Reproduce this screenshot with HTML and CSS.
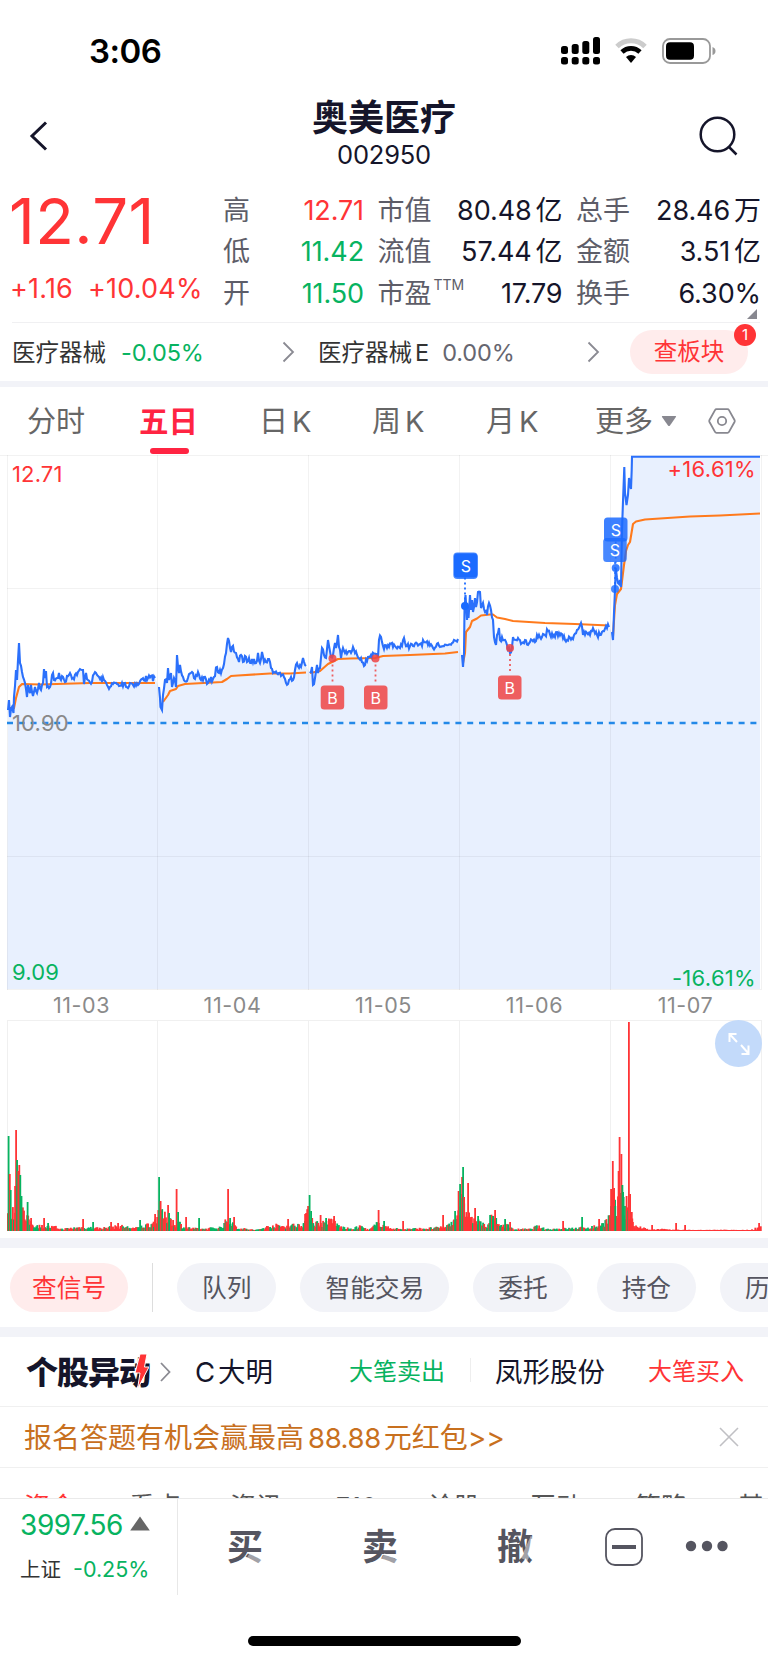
FILE: index.html
```html
<!DOCTYPE html>
<html lang="zh-CN">
<head>
  <meta charset="UTF-8" />
  <meta name="viewport" content="width=device-width, initial-scale=1.0"/>
  <title>奥美医疗 002950</title>
  <link rel="stylesheet" href="styles.css">
</head>
<body>
  <div class="status-bar">
    <span class="time">3:06</span>
    <svg class="signal" width="40" height="28" viewBox="0 0 40 28">
      <rect x="0" y="9" width="7" height="8" rx="2.5"/>
      <rect x="10.7" y="7" width="7" height="10" rx="2.5"/>
      <rect x="21.3" y="4" width="7" height="13" rx="2.5"/>
      <rect x="32" y="0" width="7" height="17" rx="2.5"/>
      <rect x="0" y="20" width="7" height="7.5" rx="2.5"/>
      <rect x="10.7" y="20" width="7" height="7.5" rx="2.5"/>
      <rect x="21.3" y="20" width="7" height="7.5" rx="2.5"/>
      <rect x="32" y="20" width="7" height="7.5" rx="2.5"/>
    </svg>
    <svg class="wifi" width="34" height="26" viewBox="0 0 34 26">
      <path d="M3 8.5a20 20 0 0 1 28 0" fill="none" stroke="#ccc" stroke-width="5"/>
      <path d="M8 14a13 13 0 0 1 18 0" fill="none" stroke="#000" stroke-width="4.6"/>
      <path d="M17 25l-5-6a7.4 7.4 0 0 1 10 0z"/>
    </svg>
    <svg class="battery" width="54" height="26" viewBox="0 0 54 26">
      <rect x="1" y="1" width="47" height="24" rx="7" fill="none" stroke="#999" stroke-width="1.8"/>
      <rect x="4" y="4.2" width="28" height="17.6" rx="4"/>
      <path d="M50.5 9v8q3-1 3-4t-3-4z" fill="#999"/>
    </svg>
  </div>

  <header class="header">
    <svg width="20" height="30" viewBox="0 0 20 30"><path d="M17 1.5L3 15l14 13.5" fill="none" stroke="#15152a" stroke-width="3"/></svg>
    <div class="title">
      <h1>奥美医疗</h1>
      <span>002950</span>
    </div>
    <svg width="40" height="40" viewBox="0 0 40 40"><g fill="none" stroke="#15152a" stroke-width="2.5"><circle cx="18.5" cy="18.5" r="16.8"/><path d="M30 31l7.5 7.5"/></g></svg>
  </header>

  <section class="quote">
    <div class="price-box">
      <div class="price">12.71</div>
      <div class="change"><span>+1.16</span><span>+10.04%</span></div>
    </div>
    <div class="stats">
      <div class="stat"><label>高</label><b class="up">12.71</b></div>
      <div class="stat"><label>市值</label><b>80.48<i>亿</i></b></div>
      <div class="stat"><label>总手</label><b>28.46<i>万</i></b></div>
      <div class="stat"><label>低</label><b class="down">11.42</b></div>
      <div class="stat"><label>流值</label><b>57.44<i>亿</i></b></div>
      <div class="stat"><label>金额</label><b>3.51<i>亿</i></b></div>
      <div class="stat"><label>开</label><b class="down">11.50</b></div>
      <div class="stat"><label>市盈<sup>TTM</sup></label><b>17.79</b></div>
      <div class="stat"><label>换手</label><b>6.30%</b></div>
    </div>
    <div class="corner"></div>
  </section>

  <section class="sectors">
    <div class="sector">医疗器械<span class="down">-0.05%</span></div>
    <svg class="arrow" width="13" height="22" viewBox="0 0 13 22"><path d="M1.5 1.5L11 11l-9.5 9.5"/></svg>
    <div class="sector second">医疗器械<em>E</em><span class="flat">0.00%</span></div>
    <svg class="arrow" width="13" height="22" viewBox="0 0 13 22"><path d="M1.5 1.5L11 11l-9.5 9.5"/></svg>
    <div class="check-btn">查板块<span class="badge">1</span></div>
  </section>

  <div class="band small"></div>

  <nav class="tabs">
    <span>分时</span>
    <span class="active">五日</span>
    <span>日<em>K</em></span>
    <span>周<em>K</em></span>
    <span>月<em>K</em></span>
    <span class="more">更多<svg width="16" height="12" viewBox="0 0 16 12"><path d="M1.500 1h13q1 0 .4 1L9 10.500q-1 1.200-2 0L1 2q-.5-1 .5-1z" fill="#888890"/></svg></span>
    <svg class="gear" width="28" height="26" viewBox="0 0 28 26"><g fill="none" stroke="#888890" stroke-width="1.8"><path d="M8.500 1.200h11q1 0 1.500.9L26.500 12q.5 1 0 2L21 23.900q-.5.9-1.500.9h-11q-1 0-1.500-.9L1.500 14q-.5-1 0-2L7 2.100q.5-.9 1.500-.9z"/><circle cx="14" cy="13" r="4.200"/></g></svg>
  </nav>

  <section class="chart">
    <svg id="priceChart" width="768" height="536" viewBox="0 0 768 536"></svg>
    <span class="lab top-left up">12.71</span>
    <span class="lab top-right up">+16.61%</span>
    <span class="lab mid">10.90</span>
    <span class="lab bottom-left down">9.09</span>
    <span class="lab bottom-right down">-16.61%</span>
  </section>

  <div class="dates">
    <span>11-03</span><span>11-04</span><span>11-05</span><span>11-06</span><span>11-07</span>
  </div>

  <section class="volume">
    <svg id="volumeChart" width="768" height="212" viewBox="0 0 768 212"></svg>
    <div class="expand">
      <svg width="24" height="24" viewBox="0 0 24 24"><path d="M9.500 2H2.500v8M2.500 2l7.500 8M14 13l7.500 8.500M14.500 22h7v-8.500" fill="none" stroke="#fff" stroke-width="2"/></svg>
    </div>
  </section>

  <div class="band"></div>

  <div class="actions">
    <span class="pill red">查信号</span>
    <i class="sep"></i>
    <span class="pill">队列</span>
    <span class="pill">智能交易</span>
    <span class="pill">委托</span>
    <span class="pill">持仓</span>
    <span class="pill">历史</span>
  </div>

  <div class="band"></div>

  <div class="unusual">
    <div class="logo">个股异动<svg width="14" height="36" viewBox="0 0 14 36"><path d="M5 0h7L9.500 13H14L2.500 35 5 19H0z" fill="#ff3436" stroke="#fff" stroke-width="1"/></svg></div>
    <svg class="arrow" width="11" height="20" viewBox="0 0 11 20"><path d="M1 1l8.500 9L1 19"/></svg>
    <span class="name">C<i>大明</i></span>
    <span class="tag down">大笔卖出</span>
    <i class="line"></i>
    <span class="name2">凤形股份</span>
    <span class="tag2 up">大笔买入</span>
  </div>

  <div class="promo">
    <span>报名答题有机会赢最高<em>88.88</em>元红包&gt;&gt;</span>
    <svg width="20" height="20" viewBox="0 0 20 20"><path d="M1 1l18 18M19 1L1 19" stroke="#c0c0c4" stroke-width="1.600"/></svg>
  </div>

  <div class="sub-tabs">
    <span class="on">资金</span><span>看点</span><span>资讯</span><span>F10</span><span>诊股</span><span>互动</span><span>策略</span><span>基金</span>
  </div>

  <footer class="bottom">
    <div class="index">
      <div class="index-value down">3997.56<svg width="20" height="15" viewBox="0 0 20 15"><path d="M10 .5L19.800 14.500H.2z" fill="#666"/></svg></div>
      <div class="index-change">上证<span class="down">-0.25%</span></div>
    </div>
    <div class="trade buy">买</div>
    <div class="trade sell">卖</div>
    <div class="trade cancel">撤</div>
    <svg class="box" width="38" height="38" viewBox="0 0 38 38"><rect x="1" y="1" width="36" height="36" rx="9" fill="none" stroke="#555560" stroke-width="1.800"/><path d="M7 19h24" stroke="#555560" stroke-width="4"/></svg>
    <svg class="dots" width="44" height="12" viewBox="0 0 44 12" fill="#555560"><circle cx="6" cy="6" r="5.200"/><circle cx="22" cy="6" r="5.200"/><circle cx="37.500" cy="6" r="5.200"/></svg>
  </footer>
  <div class="home-bar"></div>

  <script src="chart.js"></script>
</body>
</html>
```
FILE: styles.css
```css
* {
  box-sizing: border-box;
}
body {
  margin: 0;
  width: 768px;
  height: 1663px;
  overflow: hidden;
  background: #fff;
  color: #15152a;
  font-family: Inter, "Noto Sans CJK SC", sans-serif;
}
svg {
  display: block;
  flex: none;
}
i, em {
  font-style: normal;
}
.up {
  color: #ff3436;
}
.down {
  color: #07b360;
}
.flat {
  color: #666670;
}
.arrow path {
  fill: none;
  stroke: #8a8a92;
  stroke-width: 1.8;
}

/* status bar */
.status-bar {
  display: flex;
  align-items: center;
  height: 102px;
  padding-left: 89px;
  color: #000;
}
.time {
  width: 472px;
  font-size: 33px;
  font-weight: 600;
  letter-spacing: -0.5px;
}
.wifi {
  margin-left: 13px;
}
.battery {
  margin-left: 14px;
}

/* header */
.header {
  display: flex;
  align-items: center;
  justify-content: space-between;
  height: 68px;
  padding: 0 29px 0 29px;
}
.title {
  text-align: center;
}
.title h1 {
  margin: 0;
  font-size: 36px;
  line-height: 38px;
  font-weight: 700;
  padding-left: 20px;
}
.title span {
  display: block;
  font-size: 25.5px;
  line-height: 36px;
  padding-left: 20px;
  letter-spacing: -0.2px;
}

/* quote */
.quote {
  position: relative;
  display: flex;
  height: 153px;
  margin: 0 8px 0 12px;
  padding-top: 20px;
  border-bottom: 1px solid #f0f0f2;
}
.price-box {
  width: 211px;
  color: #ff3436;
  white-space: nowrap;
}
.price {
  margin-left: -3px;
  font-size: 63.5px;
  line-height: 62px;
  letter-spacing: 0.4px;
}
.change {
  display: flex;
  gap: 15px;
  margin-left: -2px;
  margin-top: 20px;
  font-size: 27px;
  line-height: 34px;
  letter-spacing: 0.2px;
}
.stats {
  display: grid;
  grid-template-columns: 140px 184px 184px;
  grid-template-rows: repeat(3, 41.5px);
  column-gap: 14.5px;
}
.stat {
  display: flex;
  justify-content: space-between;
  align-items: center;
  font-size: 27px;
  line-height: 40px;
  white-space: nowrap;
}
.stat label {
  display: flex;
  color: #5d5d68;
}
.stat b {
  font-weight: 400;
  margin-right: -1px;
  letter-spacing: -0.1px;
}
.stat i {
  margin-left: 4px;
}
.stat sup {
  margin-left: 2px;
  font-size: 14px;
  line-height: 22px;
}
.corner {
  position: absolute;
  right: 3px;
  bottom: 3px;
  border-left: 10px solid transparent;
  border-bottom: 10px solid #888890;
}

/* sectors */
.sectors {
  display: flex;
  align-items: center;
  height: 58px;
  padding-left: 12px;
  font-size: 23.5px;
}
.sector {
  display: flex;
  align-items: baseline;
  width: 270px;
  padding-bottom: 2px;
  color: #333;
}
.sector span {
  margin-left: 15px;
  letter-spacing: -0.1px;
}
.sector.second {
  width: 269px;
  margin-left: 23px;
}
.sector.second span {
  margin-left: 13px;
}
.sector.second em {
  margin-left: 3px;
}
.check-btn {
  position: relative;
  width: 118px;
  height: 44px;
  margin-left: 30px;
  border-radius: 22px;
  background: #ffecec;
  color: #ff3436;
  line-height: 43px;
  text-align: center;
}
.badge {
  position: absolute;
  top: -6px;
  right: -8px;
  width: 22px;
  height: 22px;
  border-radius: 50%;
  background: #ff3436;
  color: #fff;
  font-size: 15px;
  line-height: 22px;
}
.band {
  height: 10px;
  background: #f2f3f8;
}
.band.small {
  height: 6px;
}

/* period tabs */
.tabs {
  display: flex;
  align-items: center;
  height: 68px;
  padding-left: 27px;
  color: #666;
  font-size: 29px;
}
.tabs span {
  position: relative;
  width: 113px;
  line-height: 69px;
  height: 68px;
  white-space: nowrap;
}
.tabs span:nth-child(3) {
  margin-left: 7px;
}
.tabs span:nth-child(5) {
  margin-left: 1px;
  width: 109px;
}
.tabs .active {
  margin-left: -1px;
  color: #ff2442;
  font-size: 29.5px;
  font-weight: 700;
}
.tabs .active::after {
  content: "";
  position: absolute;
  left: 11px;
  bottom: 1px;
  width: 39px;
  height: 6px;
  border-radius: 3px;
  background: #ff2442;
}
.tabs em {
  margin-left: 4px;
}
.tabs .more {
  display: flex;
  align-items: center;
}
.more svg {
  margin-left: 8px;
}

/* charts */
.chart {
  position: relative;
  height: 536px;
}
.lab {
  position: absolute;
  font-size: 22px;
  line-height: 22px;
  letter-spacing: 0.15px;
}
.top-left {
  left: 12px;
  top: 8px;
}
.top-right {
  right: 12px;
  top: 3px;
  letter-spacing: 0.3px;
}
.mid {
  left: 12px;
  top: 257px;
  color: #888;
}
.bottom-left {
  left: 12px;
  bottom: 8px;
}
.bottom-right {
  right: 12px;
  bottom: 2px;
  letter-spacing: 0.3px;
}
#priceChart text {
  fill: #fff;
  font-size: 16px;
  text-anchor: middle;
}
.dates {
  display: grid;
  grid-template-columns: repeat(5, 151px);
  height: 29px;
  padding-left: 6px;
  color: #8a8a8a;
  font-size: 21.5px;
  line-height: 29px;
  letter-spacing: 0.6px;
  text-align: center;
}
.volume {
  position: relative;
  height: 218px;
}
.expand {
  position: absolute;
  top: 0;
  right: 6px;
  display: flex;
  align-items: center;
  justify-content: center;
  width: 47px;
  height: 47px;
  border-radius: 50%;
  background: #c3dafa;
}

/* action pills */
.actions {
  display: flex;
  align-items: center;
  height: 79px;
  gap: 24px;
  padding-left: 10px;
  overflow: hidden;
}
.pill {
  flex: none;
  height: 49px;
  padding: 0 25px;
  border-radius: 25px;
  background: #f2f3f8;
  color: #555560;
  font-size: 24.7px;
  line-height: 50px;
}
.pill.red {
  padding: 0 22px;
  background: #ffecec;
  color: #ff3436;
}
.sep {
  flex: none;
  width: 1px;
  height: 49px;
  background: #ddd;
}

/* unusual moves */
.unusual {
  display: flex;
  align-items: center;
  height: 69px;
  padding: 0 0 4px 26px;
  font-size: 27.5px;
  white-space: nowrap;
}
.logo {
  position: relative;
  width: 134px;
  font-size: 32px;
  font-weight: 900;
  letter-spacing: -1px;
}
.logo svg {
  position: absolute;
  left: 109px;
  top: 7px;
}
.unusual .arrow {
  margin-top: 4px;
}
.name {
  width: 154px;
  margin-left: 24px;
}
.name i {
  margin-left: 3px;
}
.tag {
  width: 121px;
}
.tag, .tag2 {
  font-size: 24px;
}
.line {
  width: 1px;
  height: 24px;
  background: #eee;
}
.name2 {
  width: 153px;
  margin-left: 24px;
}
.promo {
  display: flex;
  align-items: center;
  justify-content: space-between;
  height: 62px;
  padding: 0 29px 2px 24px;
  border-top: 1px solid #f0f0f0;
  border-bottom: 1px solid #f0f0f0;
  color: #c8701e;
  font-size: 28px;
}
.promo svg {
  margin-top: 2px;
}
.promo em {
  margin: 0 3px 0 4px;
  font-size: 27.5px;
  letter-spacing: -0.4px;
}
.sub-tabs {
  display: grid;
  grid-template-columns: 105px 101px 105px 93px 102px 105px 103px 60px;
  height: 30px;
  padding: 22px 0 0 24px;
  overflow: hidden;
  color: #555;
  font-size: 26px;
  line-height: 34px;
}
.sub-tabs .on {
  color: #ff3436;
}

/* bottom bar */
.bottom {
  position: relative;
  display: flex;
  height: 97px;
  border-top: 1px solid #eaeaea;
  background: #fff;
}
.index {
  width: 178px;
  padding-left: 20px;
  border-right: 1px solid #e8e8e8;
}
.index-value {
  display: flex;
  align-items: center;
  gap: 7px;
  padding-top: 6px;
  font-size: 28px;
  line-height: 40px;
  letter-spacing: -0.4px;
}
.index-value svg {
  margin-top: -3px;
}
.index-change {
  padding-top: 4px;
  color: #333;
  font-size: 20.5px;
  line-height: 40px;
}
.index-change span {
  margin-left: 12px;
  font-size: 21.5px;
}
.trade {
  position: relative;
  width: 135px;
  color: #555560;
  font-size: 36px;
  font-weight: 700;
  line-height: 96px;
  padding-left: 49px;
}
.trade::after {
  content: "";
  position: absolute;
  left: 69px;
  top: 58px;
  width: 18px;
  height: 6px;
  background: rgba(255, 255, 255, 0.45);
  transform: rotate(28deg);
}
.trade.cancel::after {
  left: 69px;
  top: 46px;
  height: 7px;
  width: 24px;
  transform: rotate(-66deg);
}
.box {
  margin: 29px 0 0 22px;
}
.dots {
  margin: 41px 0 0 42px;
}
.home-bar {
  width: 273px;
  height: 10px;
  margin: 41px auto 0 248px;
  border-radius: 5px;
  background: #000;
}
```
FILE: chart.js
```js
// price points of each day: x, y, x, y ...
const prices = [
  [8,255,9,245,10,262,12,252,13.5,258,14,242,16,215,17,225,19,188,20,208,22,217,25,228,27,242,28,230,30,238,31,230,33,241,35,232,37,238,39,228,41,235,43,228,44,214,45,223,46,216,47,232,50,232,53,218,54,225,57,223,59,218,61,225,63,222,65,227,67,221,70,218,73,223,78,217,83,215,84,229,86,218,88,225,92,227,94,219,96,218,100,224,104,225,107,230,110,232,115,228,119,231,125,228,128,233,130,228,138,230,142,224,148,223,155,223],
  [159,232,160,243,160.5,252,162,255,163,240,165,225,167,228,168,213,169,225,171,218,172,232,174,223,176,232,177,200,179,218,180,210,183,222,187,226,191,218,195,224,198,217,201,225,204,222,208,228,214,222,217,212,219,218,223,213,226,198,228,183,231,197,232,192,236,198,239,207,241,200,243,207,245,201,247,207,249,203,251,208,254,204,256,208,258,198,260,208,262,197,264,207,269,204,271,213,274,217,279,218,284,222,286,228,289,225,291,222,293,225,295,215,297,208,299,213,301,212,303,203,305,210,306,211],
  [310,218,312,212,313,230,315,223,317,210,318,218,320,213,322,193,324,200,326,203,328,185,331,202,333,200,335,188,336,193,338,180,339,192,341,203,343,193,345,198,348,197,351,198,353,192,355,198,357,200,361,203,365,210,368,202,371,200,378,202,379,185,381,182,383,191,387,193,392,188,395,191,400,193,402,191,404,183,407,191,413,191,420,189,424,187,428,190,433,193,438,188,443,191,448,190,452,188,454,185,458,184],
  [462,200,463,212,464,198,464.5,155,465.5,140,467,165,468,152,468.5,163,470,140,471,155,472,145,473,157,475,143,476,152,478,137,480,137,481,153,483,148,487,160,489,148,491,155,493,165,494,182,496,190,497,180,499,173,500,185,502,182,504,185,507,190,510,198,512,192,513,182,516,185,518,183,522,188,525,185,528,190,532,185,535,187,537,180,542,182,545,180,548,176,551,182,554,180,559,178,565,185,572,183,577,175,581,168,583,180,587,178,590,180,593,173,597,180,600,180,603,176,606,171,609,172],
  [612,177,613,185,614,158,615,135,615.7,113,617,123,618,128,620,125,621,132,622,75,624.3,12,625,38,626.5,50,628,40,629,23,631,34,631.7,15,632,1.7,760,1.7]
];
const averages = [
  [8,253,14,253,16,243,19,232,22,229,40,229.5,90,228,155,228],
  [163,247,168,240,170,236,176,234,178,231,185,229,222,227,227,224,231,221,238,220.5,270,218.5,290,218.5,306,217.5],
  [310,218,320,216,328,209,338,204,350,203.5,375,203,383,201,410,200,445,198.5,458,197],
  [463,208,465,198,466,177,470,172,472,166,477,163.5,481,160.5,490,159.5,493,159.5,497,162.5,505,164,513,166,545,168,575,169,609,170.5],
  [613,181,615,150,617,139,621,134,624,110,626,96,628,90,630,87,631.5,78,633,69,636,66.5,645,64.5,690,61.5,720,60.5,760,58.5]
];
const gridX = [7.5, 157.5, 308.5, 459.5, 610.5, 761.5];

let seed = 7;
function rand() {
  seed = (seed * 16807) % 2147483647;
  return seed / 2147483647;
}

// fill the space between the points with small ticks
function jitter(list) {
  const out = [];
  for (let i = 0; i < list.length; i += 2) {
    const x = list[i], y = list[i + 1];
    out.push([x, y]);
    if (i + 3 < list.length && y > 2) {
      const steps = Math.floor((list[i + 2] - x) / 0.9);
      for (let s = 1; s < steps; s++) {
        const t = s / steps;
        out.push([x + (list[i + 2] - x) * t, y + (list[i + 3] - y) * t + (rand() - 0.5) * 6]);
      }
    }
  }
  return out;
}

const toText = pts => pts.map(p => p[0].toFixed(1) + "," + p[1].toFixed(1)).join(" ");

const days = prices.map(jitter);
let svg = `<polygon points="7,534 ${toText(days.flat())} 760,534" fill="#e8f0fe"/>`;
svg += `<g stroke="#000" stroke-opacity=".05">`;
gridX.forEach(x => svg += `<path d="M${x} 0V535"/>`);
[0.5, 133.5, 401.5, 534.5].forEach(y => svg += `<path d="M7 ${y}H761"/>`);
svg += `<path d="M0 .5H7M761 .5H768"/></g>`;
averages.forEach(a => svg += `<polyline points="${a.join(" ")}" fill="none" stroke="#ff7a1c" stroke-width="2.1" stroke-linejoin="round"/>`);
days.forEach(d => svg += `<polyline points="${toText(d)}" fill="none" stroke="#2b70fb" stroke-width="2.1"/>`);
svg += `<path d="M7 268H760" stroke="#2389e8" stroke-width="2.600" stroke-dasharray="6 5.8"/>`;

function marker(letter, x, boxY, dotX, dotY, alpha) {
  const color = letter == "B" ? "#f04545" : "#1b6bff";
  const from = letter == "B" ? dotY + 6 : boxY + 24;
  const to = letter == "B" ? boxY - 2 : dotY;
  svg += `<g opacity="${alpha}"><path d="M${dotX} ${from}V${to}" stroke="${color}" stroke-width="1.8" stroke-dasharray="2 3"/>
    <circle cx="${dotX}" cy="${dotY}" r="4" fill="${color}"/>
    <rect x="${x}" y="${boxY}" width="23.5" height="24" rx="3.5" fill="${color}"/></g>
    <text x="${x + 11.8}" y="${boxY + 18}">${letter}</text>`;
}
marker("B", 320.7, 230.5, 332.5, 203.5, 0.85);
marker("B", 364, 230.5, 375.5, 203.5, 0.85);
marker("B", 498, 220.5, 510, 193, 0.85);
svg += `<rect x="453.3" y="97.5" width="24.4" height="26.500" rx="4" fill="#1b6bff" opacity=".8"/>`;
marker("S", 454, 98.5, 465, 151, 1);
marker("S", 604, 62.5, 615.7, 113, 0.85);
marker("S", 603.2, 83, 615, 134, 0.8);
document.getElementById("priceChart").innerHTML = svg;

// volume: base level by x, then the bars that stand out
const base = [7,22,12,19,15,30,20,35,22,24,24,13,28,12,32,7,40,5,55,4,60,2,80,4,100,3,120,5,135,3,145,6,153,9,158,22,164,15,170,14,174,6,178,9,183,4,190,3,200,2,220,4,226,11,232,7,238,3,255,1,272,6,285,5,303,8,308,22,313,9,320,8,328,10,333,11,338,5,350,2,360,5,368,1,378,9,385,4,400,2,430,3,445,4,453,12,460,30,466,20,471,12,480,8,485,5,492,15,498,6,505,7,512,2,530,2,536,5,545,2,575,3,590,4,600,6,609,15,612,35,616,18,620,50,623,32,627,18,632,12,634,5,642,3,650,1,660,2,680,1,700,1,750,1,760,5];
const spikes = [
  [8.5,95,"g"],[9.7,57,"r"],[10.6,41,"g"],[15,45,"r"],[16,101,"r"],[17,71,"g"],[18.2,60,"r"],[19.2,66,"r"],[20.2,56,"g"],[21.4,35,"g"],[27.5,29,"g"],[31,13,"r"],
  [44,13,"r"],[48,8,"g"],[83,12,"r"],[93,9,"g"],[111,9,"r"],[118,8,"r"],[140,11,"g"],[155,17,"r"],[159,54,"g"],[160.5,30,"r"],[168,26,"r"],[169,18,"g"],[176.5,42,"r"],[178,19,"g"],[186,14,"r"],[199,13,"g"],
  [228,42,"r"],[230,13,"g"],[234,14,"r"],[288,12,"r"],[305,17,"r"],[308,25,"r"],[309.5,36,"g"],[311,20,"g"],[320.500,16,"r"],[326,13,"g"],[334,15,"r"],[378.500,21,"r"],[384,10,"g"],[403,10,"r"],
  [443,16,"r"],[455,20,"g"],[458.5,40,"r"],[460,47,"g"],[462,54,"r"],[463,64,"g"],[464,34,"r"],[468,48,"r"],[475,23,"r"],[478,15,"g"],[490,16,"g"],[493,15,"g"],[495,21,"r"],[505,12,"g"],[510,9,"r"],
  [563,10,"r"],[582,14,"g"],[599,12,"r"],[611,42,"r"],[612.7,70,"r"],[614,43,"r"],[615.2,25,"g"],[618.5,60,"r"],[619.5,94,"r"],[621.3,77,"r"],[622.3,46,"g"],[623.5,34,"g"],[626.5,35,"r"],[628.8,209,"r"],[630,37,"r"],[631.7,19,"r"],
  [652,6,"r"],[676,8,"r"],[685,6,"r"],[759,8,"r"]
];
const baseY = 211;
const bar = (x, h, c) => `<rect x="${x.toFixed(1)}" y="${(baseY - h).toFixed(1)}" width="1.8" height="${h.toFixed(1)}" fill="${c == "g" ? "#07b360" : "#ff3436"}"/>`;

let vol = `<g stroke="#f0f0f0">`;
gridX.forEach(x => vol += `<path d="M${x} 1V211"/>`);
vol += `<path d="M7 .5H762"/></g>`;
for (let i = 0; i + 3 < base.length; i += 2) {
  for (let x = base[i]; x < base[i + 2]; x += 1.1) {
    const t = (x - base[i]) / (base[i + 2] - base[i]);
    const h = (base[i + 1] + (base[i + 3] - base[i + 1]) * t) * (0.45 + rand() * 0.85);
    vol += bar(x, Math.max(h, 1), x > 632 || rand() > 0.42 ? "r" : "g");
  }
}
spikes.forEach(s => vol += bar(s[0] - 0.8, s[1], s[2]));
document.getElementById("volumeChart").innerHTML = vol;
```
